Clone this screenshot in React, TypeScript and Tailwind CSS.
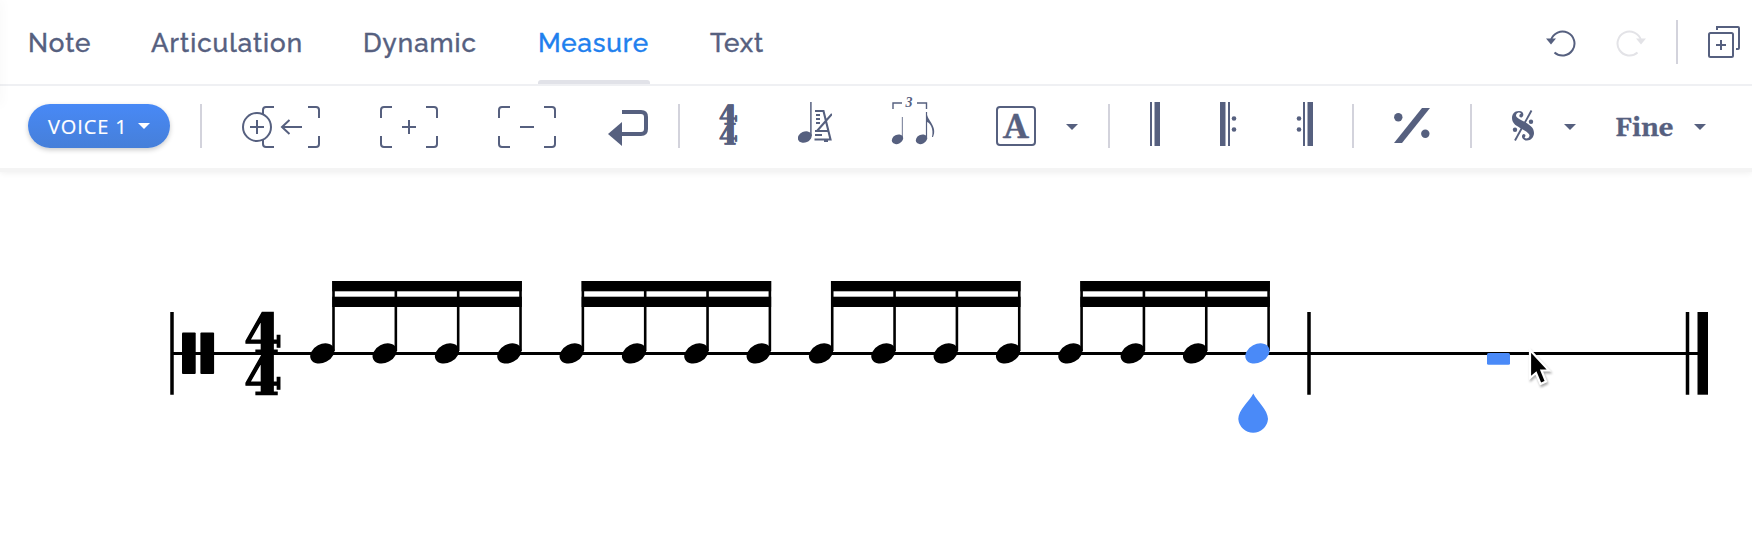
import React from "react";

type TabProps = { label: string; width: string; spacing: string; active?: boolean };

function Tab({ label, width, spacing, active }: TabProps) {
  return (
    <button
      className={`${width} ${spacing} relative flex h-[84px] shrink-0 items-center whitespace-nowrap pt-0.5 text-left font-['Raleway','Lato',sans-serif] text-[26px] font-medium [-webkit-text-stroke:0.400px] ${active ? "text-[#1f80ee]" : "text-[#56607f]"}`}
    >
      {label}
      {active && <span className="absolute bottom-0 left-0 h-1 w-full rounded-t-[3px] bg-[#e1e2e8]" />}
    </button>
  );
}

function Divider({ className = "" }: { className?: string }) {
  return <span className={`h-11 w-0.5 shrink-0 bg-[#d3d3dc] ${className}`} />;
}

function Caret({ className = "" }: { className?: string }) {
  return (
    <svg width="12" height="6" viewBox="0 0 12 6" className={`shrink-0 ${className}`}>
      <path d="M0 0H12L6 6Z" fill="currentColor" />
    </svg>
  );
}

function Corners({ x = 0 }: { x?: number }) {
  return (
    <path
      transform={`translate(${x} 0)`}
      d="M1 12V4Q1 1 4 1H12M46 1H54Q57 1 57 4V12M57 30V38Q57 41 54 41H46M12 41H4Q1 41 1 38V30"
      fill="none"
      stroke="currentColor"
      strokeWidth="2"
    />
  );
}

function InsertMeasure() {
  return (
    <svg width="78" height="42" viewBox="0 0 78 42" fill="none" stroke="currentColor" strokeWidth="2" className="ml-10 shrink-0">
      <Corners x={20} />
      <circle cx="15" cy="21" r="14" fill="white" />
      <path d="M8 21H22M15 14V28M60 21H40M47.500 14L40 21L47.500 28" />
    </svg>
  );
}

function FrameIcon({ plus }: { plus?: boolean }) {
  return (
    <svg width="58" height="42" viewBox="0 0 58 42" fill="none" stroke="currentColor" strokeWidth="2" className="ml-[60px] shrink-0">
      <Corners />
      <path d={plus ? "M22 21H36M29 14V28" : "M22 21H36"} />
    </svg>
  );
}

function LineBreak() {
  return (
    <svg width="40" height="36" viewBox="0 0 40 36" fill="none" className="mt-0.5 ml-[52px] shrink-0">
      <path d="M14 2H33Q38 2 38 7V19Q38 24 33 24H12" stroke="currentColor" strokeWidth="4" />
      <path d="M0 24L14 12V36Z" fill="currentColor" />
    </svg>
  );
}

function TimeIcon() {
  return (
    <svg width="18" height="40" viewBox="0 0 18 40" fill="currentColor" stroke="currentColor" strokeWidth="0.500" className="mb-1.5 ml-10 shrink-0 overflow-visible font-['Abril_Fatface','DejaVu_Serif',serif] font-bold">
      <text x="0" y="19.500" fontSize="26" textLength="17" lengthAdjust="spacingAndGlyphs">4</text>
      <text x="0" y="39.500" fontSize="26" textLength="17" lengthAdjust="spacingAndGlyphs">4</text>
    </svg>
  );
}

function TempoIcon() {
  return (
    <svg width="34" height="42" viewBox="0 0 34 42" fill="none" stroke="currentColor" className="mb-2 ml-[60px] shrink-0">
      <ellipse cx="6.800" cy="35" rx="7.200" ry="5.400" transform="rotate(-24 6.800 35)" fill="currentColor" stroke="none" />
      <path d="M12.900 34V0" strokeWidth="1.500" />
      <path d="M17 9H25.500L32.500 37.500H16.500M18 13H22M18 17H22M18 21H22M17 29H31M17 33H24M34 12L19 29" strokeWidth="2.100" />
      <path d="M26 37H30V40H26Z" fill="currentColor" stroke="none" />
    </svg>
  );
}

function TupletIcon() {
  return (
    <svg width="43" height="47" viewBox="0 0 43 47" fill="none" stroke="currentColor" className="mb-[11px] ml-[60px] shrink-0 overflow-visible">
      <path d="M1 11V5H10M25 5H34.500V11" strokeWidth="1.400" />
      <text x="13.500" y="9" fontSize="14" fill="currentColor" stroke="none" className="font-['Liberation_Serif',serif] font-bold italic">3</text>
      <ellipse cx="5.500" cy="41.300" rx="6" ry="4.500" transform="rotate(-28 5.500 41.300)" fill="currentColor" stroke="none" />
      <ellipse cx="29.500" cy="41.300" rx="6" ry="4.500" transform="rotate(-28 29.500 41.300)" fill="currentColor" stroke="none" />
      <path d="M10.400 41V19" strokeWidth="1.200" opacity=".7" />
      <path d="M34.500 41V14" strokeWidth="1.200" />
      <path d="M34.500 14C35 23 46 28 41 39H40C42 31 38 24 34.500 24Z" fill="currentColor" stroke="none" />
    </svg>
  );
}

function RehearsalMark() {
  return (
    <span className="mb-0.5 ml-[61px] flex h-10 w-10 shrink-0 items-center justify-center rounded-[4px] border-2 border-current pt-[3px] font-['Gelasio','Libre_Baskerville',serif] text-[34px] leading-none font-bold [-webkit-text-stroke:0.500px]">
      A
    </span>
  );
}

function Barline() {
  return (
    <svg width="10" height="44" viewBox="0 0 10 44" fill="currentColor" className="mb-1.5 ml-10 shrink-0">
      <path d="M0 0H2V44H0ZM4.500 0H10V44H4.500Z" />
    </svg>
  );
}

function RepeatBar({ end }: { end?: boolean }) {
  return (
    <svg width="17" height="44" viewBox="0 0 17 44" fill="currentColor" className={`mb-1.5 shrink-0 ${end ? "ml-[59px]" : "ml-[60px]"}`}>
      <g transform={end ? "translate(17 0) scale(-1 1)" : undefined}>
        <path d="M0 0H5.500V44H0ZM8 0H10V44H8Z" />
        <circle cx="14" cy="16.500" r="2.300" />
        <circle cx="14" cy="27.500" r="2.300" />
      </g>
    </svg>
  );
}

function Simile() {
  return (
    <svg width="36" height="36" viewBox="0 0 36 36" fill="currentColor" className="mb-0.5 ml-10 shrink-0">
      <path d="M28 0H36L8 35H0Z" />
      <circle cx="4.300" cy="9.300" r="4.200" />
      <circle cx="31.300" cy="25.800" r="4.200" />
    </svg>
  );
}

function Segno() {
  return (
    <svg width="22" height="31" viewBox="0 0 22 31" className="mb-[3px] ml-10 shrink-0">
      <path d="M19.500 0.500L3 30.500" stroke="currentColor" strokeWidth="1.900" />
      <path d="M9.500 7.500C12.500 6 12 1 7 1C2 1 0 4.500 0 8C0 14 5 16 10 19C15 22 19 24 17 27C16 29 13 28.500 12.500 27.500C15 25.500 12 22.500 10.300 25C9 28 12 30.500 15 30.500C19 30.500 22 27 22 23C22 17 17 14.500 12 11.500C7 8.500 2.500 7 4.500 4C5.500 2.300 8 2 9 3.500C6.500 4.500 7 8 9.500 7.500Z" fill="currentColor" />
      <circle cx="19" cy="11.800" r="2.200" fill="currentColor" />
      <circle cx="3" cy="19.700" r="2.200" fill="currentColor" />
    </svg>
  );
}

function UndoIcon({ redo }: { redo?: boolean }) {
  return (
    <svg width="30" height="27" viewBox="0 0 30 27" fill="none" className="mt-0.5 shrink-0">
      <g transform={redo ? "translate(30 0) scale(-1 1)" : undefined}>
        <path d="M5 10A12 12 0 1 1 8.500 22.500" stroke="currentColor" strokeWidth="2" />
        <path d="M0 8.500L10 8.500L5 14.500Z" fill="currentColor" />
      </g>
    </svg>
  );
}

function AddPage() {
  return (
    <svg width="32" height="32" viewBox="0 0 32 32" fill="none" stroke="currentColor" strokeWidth="2" className="shrink-0">
      <rect x="1" y="7" width="24" height="24" rx="1.500" />
      <path d="M9 4V1H30Q31 1 31 2V22Q31 23 30 23H28M8 19H18M13 14V24" />
    </svg>
  );
}

const NOTES = Array.from({ length: 16 }, (_, i) => 322.3 + i * 62.34);
const BEAMS = [0, 4, 8, 12];

function Score() {
  return (
    <svg width="1752" height="380" viewBox="0 168 1752 380" className="block">
      <path d="M171 353.500H1700" stroke="black" strokeWidth="3" />
      <path d="M172 312V394.700M1309 312V394.700M1687.500 312V394.700" stroke="black" strokeWidth="3.500" />
      <rect x="1697.500" y="312" width="10.500" height="82.700" />
      <rect x="182" y="332.500" width="13.700" height="41.500" rx="1" />
      <rect x="200.400" y="332.500" width="13.700" height="41.500" rx="1" />
      <g className="font-['Abril_Fatface','DejaVu_Serif',serif] font-bold" stroke="black" strokeWidth="1">
        <text x="246.500" y="352" fontSize="55" textLength="34" lengthAdjust="spacingAndGlyphs">4</text>
        <text x="246.500" y="393.700" fontSize="55" textLength="34" lengthAdjust="spacingAndGlyphs">4</text>
      </g>
      {BEAMS.map((n) => (
        <g key={n}>
          <rect x={NOTES[n] + 10} y="281" width="189.500" height="10.300" />
          <rect x={NOTES[n] + 10} y="296.700" width="189.500" height="10.300" />
        </g>
      ))}
      {NOTES.map((x, i) => (
        <g key={i}>
          <path d={`M${x + 11.2} 281V351`} stroke="black" strokeWidth="2.600" />
          <ellipse cx={x} cy="353.400" rx="12.800" ry="9.200" transform={`rotate(-28 ${x} 353.400)`} fill={i === 15 ? "#4a8af8" : "black"} />
        </g>
      ))}
      <path d="M1253.300 393.500C1257 401 1268 410 1268 419A14.900 14.900 0 0 1 1238.300 419C1238.300 410 1249.500 401 1253.300 393.500Z" fill="#4a8af8" />
      <rect x="1487" y="353" width="23" height="11.800" rx="1.500" fill="#4a8af8" />
      <path d="M1530 350V378L1536 373L1540.500 384L1546 381.500L1541.500 370.500H1549Z" fill="black" stroke="white" strokeWidth="2.200" className="drop-shadow-[1px_2px_1px_#00000055]" />
    </svg>
  );
}

export default function App() {
  return (
    <div className="relative h-[548px] w-[1752px] overflow-hidden bg-white text-[#56607f]">
      <span className="absolute top-0 -left-1 h-[105px] w-1 shadow-[0_0_12px_#00000010]" />
      <header className="flex h-[86px] border-b-2 border-[#eff0f3] pl-7">
        <Tab label="Note" width="w-[123px]" spacing="tracking-[1px]" />
        <Tab label="Articulation" width="w-[212px]" spacing="tracking-[1px]" />
        <Tab label="Dynamic" width="w-[175px]" spacing="tracking-[1px]" />
        <Tab label="Measure" width="w-[112px]" spacing="tracking-[0.850px]" active />
        <Tab label="Text" width="w-[60px] ml-[60px]" spacing="tracking-[0.900px]" />
        <div className="ml-auto flex items-center pr-3">
          <UndoIcon />
          <span className="ml-10 flex text-[#e3e3e7]"><UndoIcon redo /></span>
          <Divider className="ml-[30px]" />
          <span className="ml-[30px] flex"><AddPage /></span>
        </div>
      </header>
      <nav className="flex h-[82px] items-center pl-7 shadow-[0_4px_0_#f4f4f4,0_5px_6px_#00000010]">
        <button className="mb-0.5 flex h-11 w-[142px] shrink-0 items-center rounded-full bg-linear-to-b from-[#4889f6] to-[#467fd9] pl-5 font-['Open_Sans',sans-serif] text-[20px] font-medium text-white shadow-[0_2px_5px_#00000035]">
          <span className="w-[90px] pt-px text-left tracking-[0.900px] whitespace-nowrap [-webkit-text-stroke:0.200px]">VOICE 1</span>
          <Caret />
        </button>
        <Divider className="mb-0.5 ml-[30px]" />
        <InsertMeasure />
        <FrameIcon plus />
        <FrameIcon />
        <LineBreak />
        <Divider className="mb-0.5 ml-[30px]" />
        <TimeIcon />
        <TempoIcon />
        <TupletIcon />
        <RehearsalMark />
        <Caret className="ml-[30px]" />
        <Divider className="mb-0.5 ml-[30px]" />
        <Barline />
        <RepeatBar />
        <RepeatBar end />
        <Divider className="mb-0.5 ml-[39px]" />
        <Simile />
        <Divider className="mb-0.5 ml-10" />
        <Segno />
        <Caret className="ml-[30px]" />
        <span className="ml-[39px] w-[79px] shrink-0 pt-1 font-['Gelasio','Libre_Baskerville',serif] text-[25.500px] leading-none font-bold [-webkit-text-stroke:0.400px]">Fine</span>
        <Caret />
      </nav>
      <Score />
    </div>
  );
}
